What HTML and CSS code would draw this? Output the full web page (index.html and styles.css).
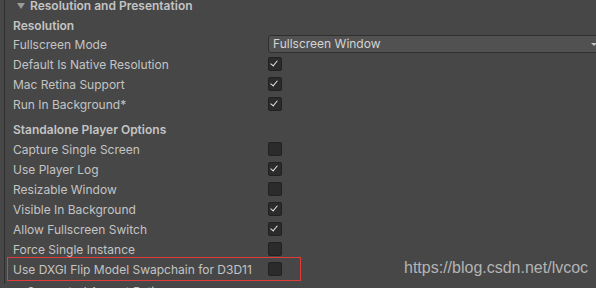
FILE: index.html
```html
<!DOCTYPE html>
<html lang="en">
<head>
  <meta charset="UTF-8">
  <meta name="viewport" content="width=device-width, initial-scale=1.0">
  <title>Player Settings</title>
  <link rel="stylesheet" href="styles.css">
</head>
<body>
  <div class="panel">
    <div class="foldout open">Resolution and Presentation</div>

    <div class="section">Resolution</div>
    <div class="row">
      <span class="label">Fullscreen Mode</span>
      <div class="dropdown">Fullscreen Window</div>
    </div>
    <div class="row"><span class="label">Default Is Native Resolution</span><span class="check on"></span></div>
    <div class="row"><span class="label">Mac Retina Support</span><span class="check on"></span></div>
    <div class="row"><span class="label">Run In Background*</span><span class="check on"></span></div>

    <div class="section gap">Standalone Player Options</div>
    <div class="row"><span class="label">Capture Single Screen</span><span class="check"></span></div>
    <div class="row"><span class="label">Use Player Log</span><span class="check on"></span></div>
    <div class="row"><span class="label">Resizable Window</span><span class="check"></span></div>
    <div class="row"><span class="label">Visible In Background</span><span class="check on"></span></div>
    <div class="row"><span class="label">Allow Fullscreen Switch</span><span class="check on"></span></div>
    <div class="row"><span class="label">Force Single Instance</span><span class="check"></span></div>
    <div class="row marked"><span class="label">Use DXGI Flip Model Swapchain for D3D11</span><span class="check"></span></div>

    <div class="foldout closed">Supported Aspect Ratios</div>
  </div>

  <div class="watermark">https://blog.csdn.net/lvcoc</div>
</body>
</html>
```

FILE: styles.css
```css
html, body {
  margin: 0;
  height: 100%;
  overflow: hidden;
}
body {
  background: #474747;
  color: #c4c4c4;
  font-family: Inter, "Noto Sans", sans-serif;
  font-size: 12px;
  position: relative;
}
.panel {
  margin-left: 4px;
  border-left: 1px solid #2f2f2f;
  padding-left: 8px;
  height: 100%;
}
.foldout {
  height: 20px;
  line-height: 20px;
  margin-top: -4px;
  padding-left: 17px;
  font-weight: 600;
  position: relative;
}
.foldout::before {
  content: "";
  position: absolute;
  left: 4px;
  top: 7px;
  border-left: 4px solid transparent;
  border-right: 4px solid transparent;
  border-top: 6px solid #9a9a9a;
}
.foldout.closed {
  margin-top: 3px;
  padding-left: 14px;
  font-weight: 400;
}
.foldout.closed::before {
  left: 4px;
  top: 6px;
  border-top: 4px solid transparent;
  border-bottom: 4px solid transparent;
  border-left: 6px solid #9a9a9a;
  border-right: 0;
}
.section {
  height: 18px;
  line-height: 20px;
  font-weight: 600;
}
.section.gap {
  margin-top: 6px;
  height: 19px;
}
.row {
  height: 20px;
  display: flex;
  align-items: center;
  position: relative;
}
.label {
  width: 255px;
  flex: none;
  white-space: nowrap;
}
.check {
  width: 12px;
  height: 12px;
  background: #2b2b2b;
  border: 1px solid #212121;
  border-radius: 2px;
  position: relative;
}
.check.on::after {
  content: "";
  position: absolute;
  left: 3px;
  top: 1px;
  width: 3px;
  height: 6px;
  border-right: 1.5px solid #e4e4e4;
  border-bottom: 1.5px solid #e4e4e4;
  transform: rotate(40deg);
}
.dropdown {
  flex: 1;
  margin-right: -20px;
  height: 16px;
  line-height: 16px;
  padding-left: 4px;
  background: #515151;
  border: 1px solid #2f2f2f;
  border-radius: 3px;
  color: #d4d4d4;
  position: relative;
}
.dropdown::after {
  content: "";
  position: absolute;
  right: 18px;
  top: 7px;
  border-left: 3px solid transparent;
  border-right: 3px solid transparent;
  border-top: 3px solid #c4c4c4;
}
.row.marked::after {
  content: "";
  position: absolute;
  left: -6px;
  width: 292px;
  top: -2px;
  bottom: -2px;
  border: 1px solid #e03c3c;
}
.watermark {
  position: absolute;
  left: 404px;
  top: 259px;
  font-family: "Liberation Sans", Arial, sans-serif;
  font-size: 16px;
  color: #b4b4b4;
}
```
